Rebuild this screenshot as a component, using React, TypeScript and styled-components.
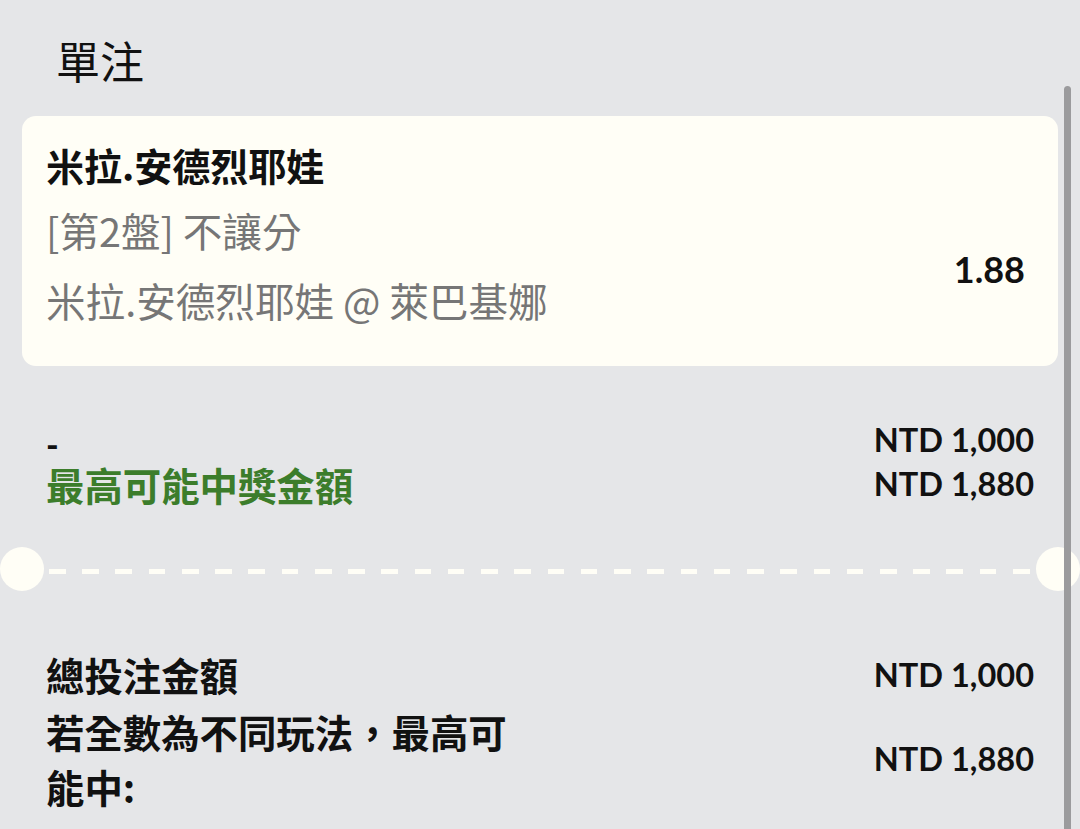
import React from "react";
import styled, { createGlobalStyle } from "styled-components";

const cjk = `"Noto Sans CJK TC", "Noto Sans", sans-serif`;
const latin = `Lato, "Noto Sans CJK TC", sans-serif`;

const GlobalStyle = createGlobalStyle`
  html, body {
    margin: 0;
    padding: 0;
    background: #e5e6e8;
  }
  body {
    font-family: ${cjk};
    color: #111;
  }
`;

const bet = {
  selection: "米拉.安德烈耶娃",
  market: "[第2盤] 不讓分",
  event: "米拉.安德烈耶娃 @ 萊巴基娜",
  odds: "1.88",
  stake: "NTD 1,000",
  payout: "NTD 1,880",
};

export default function App() {
  return (
    <>
      <GlobalStyle />
      <Page>
        <Header>
          <Title>單注</Title>
        </Header>

        <Card>
          <CardTitle>{bet.selection}</CardTitle>
          <CardBody>
            <div>
              <InfoLine>{bet.market}</InfoLine>
              <InfoLine>{bet.event}</InfoLine>
            </div>
            <Odds>{bet.odds}</Odds>
          </CardBody>
        </Card>

        <StakeSection>
          <Row>
            <Dash>-</Dash>
            <Amount>{bet.stake}</Amount>
          </Row>
          <Row>
            <Label $green>最高可能中獎金額</Label>
            <Amount>{bet.payout}</Amount>
          </Row>
        </StakeSection>

        <Divider>
          <Notch />
          <DashLine />
          <Notch />
        </Divider>

        <Summary>
          <Row>
            <Label>總投注金額</Label>
            <Amount>{bet.stake}</Amount>
          </Row>
          <Row>
            <Label $wrap>若全數為不同玩法，最高可能中:</Label>
            <Amount>{bet.payout}</Amount>
          </Row>
        </Summary>

        <ScrollThumb />
      </Page>
    </>
  );
}

const Page = styled.div`
  position: relative;
  height: 829px;
  overflow: hidden;
`;

const Header = styled.header`
  padding: 32px 56px 28px;
`;

const Title = styled.h1`
  margin: 0;
  font-family: ${cjk};
  font-size: 44px;
  line-height: 56px;
  font-weight: 400;
  color: #111;
`;

const Card = styled.section`
  box-sizing: border-box;
  height: 250px;
  margin: 0 22px;
  padding: 23px 33px 31px 24px;
  background: #fffef6;
  border-radius: 14px;
`;

const CardTitle = styled.div`
  font-size: 38px;
  line-height: 52px;
  font-weight: 700;
  color: #111;
`;

const CardBody = styled.div`
  display: flex;
  align-items: center;
  justify-content: space-between;
  margin-top: 4px;
`;

const InfoLine = styled.div`
  font-size: 39.6px;
  line-height: 70px;
  font-weight: 400;
  color: #767676;
`;

const Odds = styled.div`
  margin-top: 8px;
  font-family: ${latin};
  font-size: 36px;
  font-weight: 700;
  color: #111;
`;

const StakeSection = styled.section`
  padding: 52px 46px 41px;
`;

const Row = styled.div`
  display: flex;
  align-items: center;
  justify-content: space-between;
  gap: 24px;
`;

const Dash = styled.span`
  position: relative;
  top: 4px;
  font-family: ${latin};
  font-size: 34px;
  line-height: 20px;
  font-weight: 900;
`;

const Label = styled.div<{ $green?: boolean; $wrap?: boolean }>`
  font-size: 38.4px;
  line-height: ${({ $green }) => ($green ? "44px" : "55px")};
  font-weight: 700;
  color: ${({ $green }) => ($green ? "#3c7d2b" : "#111")};
  max-width: ${({ $wrap }) => ($wrap ? "475px" : "none")};
`;

const Amount = styled.div`
  font-family: ${latin};
  font-size: 32.5px;
  line-height: 44px;
  font-weight: 700;
  color: #111;
  white-space: nowrap;
`;

const Divider = styled.div`
  display: flex;
  align-items: center;
  height: 44px;
`;

const Notch = styled.span`
  flex: 0 0 44px;
  height: 44px;
  border-radius: 50%;
  background: #fffef6;
`;

const DashLine = styled.span`
  flex: 1;
  height: 5px;
  margin: 4px 6px 0 5px;
  background: repeating-linear-gradient(
    to right,
    #fffef6 0 16.6px,
    transparent 16.6px 33.24px
  );
`;

const Summary = styled.section`
  display: flex;
  flex-direction: column;
  gap: 2px;
  padding: 56px 46px 0;
`;

const ScrollThumb = styled.div`
  position: absolute;
  top: 86px;
  bottom: 0;
  right: 9px;
  width: 7px;
  border-radius: 4px 4px 0 0;
  background: #9b9b9d;
`;
